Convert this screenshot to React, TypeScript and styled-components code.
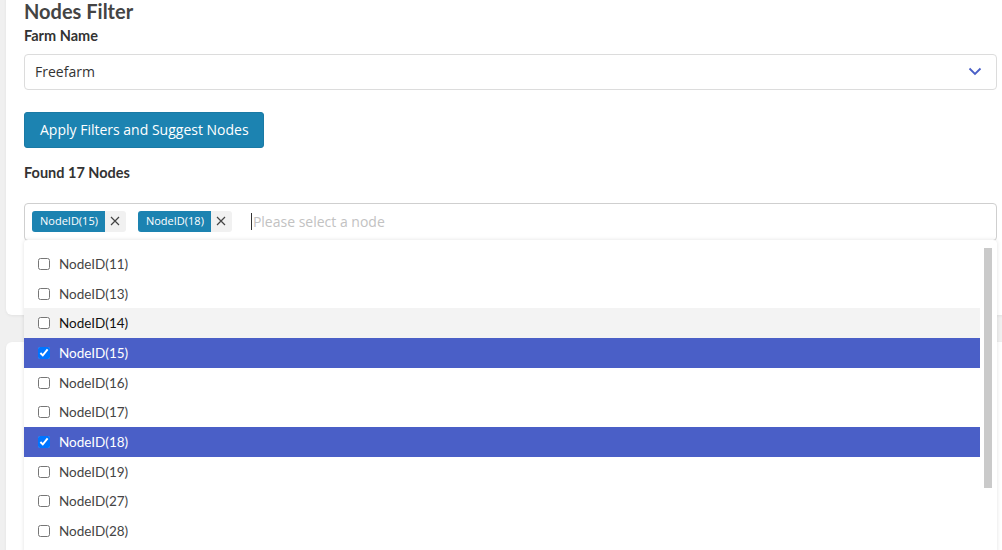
import { FC } from 'react';
import styled, { createGlobalStyle } from 'styled-components';

const GlobalStyle = createGlobalStyle`
    html, body {
        margin: 0;
        padding: 0;
        background: #f0f0f0;
        overflow: hidden;
        height: 550px;
    }
    body {
        font-family: Lato, "Open Sans", sans-serif;
    }
`

const Page = styled.div`
    position: relative;
    display: flow-root;
    width: 1002px;
    height: 550px;
    overflow: hidden;
    padding-left: 6px;
    box-sizing: border-box;
`
const Card = styled.section`
    width: 1009px;
    box-sizing: border-box;
    background: #fff;
    border-radius: 6px;
    box-shadow: 0 1px 3px rgba(0,0,0,0.06);
    padding: 18px 18px 0 18px;
`
const FilterCard = styled(Card)`
    margin-top: -19px;
    height: 334px;
    display: flex;
    flex-direction: column;
`
const NextCard = styled(Card)`
    margin-top: 27px;
    height: 300px;
`
const Title = styled.h2`
    margin: 0;
    font-size: 20px;
    line-height: 24px;
    font-weight: 700;
    color: #444;
`
const Label = styled.div<{gap?: number}>`
    margin-top: ${p => p.gap ?? 0}px;
    font-size: 14.5px;
    line-height: 20px;
    font-weight: 700;
    color: #333;
`
const SelectBox = styled.div`
    margin-top: 8px;
    height: 36px;
    box-sizing: border-box;
    border: 1px solid #dcdcdc;
    border-radius: 4px;
    display: flex;
    align-items: center;
    justify-content: space-between;
    padding: 0 14px 2px 10px;
    font-family: "Open Sans", "Noto Sans", sans-serif;
    font-size: 14px;
    color: #333;
`
const PrimaryButton = styled.button`
    margin-top: 22px;
    align-self: flex-start;
    height: 36px;
    padding: 0 14px 2px 15px;
    background: #1c83b1;
    color: #fff;
    border: 1px solid #1a7aa5;
    border-radius: 3px;
    font-family: "Open Sans", "Noto Sans", sans-serif;
    font-size: 14px;
    cursor: pointer;
`
const MultiSelect = styled.div`
    margin-top: 20px;
    height: 38px;
    box-sizing: border-box;
    border: 1px solid #cfcfcf;
    border-radius: 4px;
    display: flex;
    align-items: center;
    padding: 0 7px 2px 7px;
    gap: 12px;
`
const Tag = styled.span`
    display: inline-flex;
    height: 21px;
    border-radius: 3px;
    overflow: hidden;
    font-family: "Open Sans", "Noto Sans", sans-serif;
    font-size: 11px;
`
const TagLabel = styled.span`
    background: #1c83b1;
    color: #fff;
    display: flex;
    align-items: center;
    padding: 0 7px 1px 8px;
`
const TagRemove = styled.span`
    background: #f1f1f1;
    width: 21px;
    display: flex;
    align-items: center;
    justify-content: center;
`
const Placeholder = styled.span`
    margin-left: 7px;
    display: flex;
    align-items: center;
    font-family: "Open Sans", "Noto Sans", sans-serif;
    font-size: 14px;
    color: #c2c2c2;
    &::before {
        content: '';
        width: 1px;
        height: 17px;
        background: #333;
        margin-right: 1px;
    }
`
const Dropdown = styled.div`
    position: absolute;
    left: 24px;
    top: 240px;
    width: 973px;
    height: 314px;
    overflow: hidden;
    background: #fff;
    border-radius: 4px;
    box-shadow: 0 0 4px rgba(0,0,0,0.12);
    display: flex;
`
const OptionList = styled.ul`
    list-style: none;
    margin: 0;
    padding: 9px 0 0 0;
    flex: 1;
`
const Option = styled.li<{state?: 'hover' | 'selected'}>`
    height: 29.7px;
    display: flex;
    align-items: center;
    padding-left: 14px;
    gap: 9px;
    font-size: 13.5px;
    background: ${p => p.state === 'selected' ? '#4a5fc7' : p.state === 'hover' ? '#f3f3f3' : 'transparent'};
    color: ${p => p.state === 'selected' ? '#fff' : p.state === 'hover' ? '#111' : '#444'};
`
const Check = styled.input`
    margin: 0;
    width: 12px;
    height: 12px;
`
const ScrollTrack = styled.div`
    width: 17px;
    padding-top: 8px;
    display: flex;
    justify-content: center;
`
const ScrollThumb = styled.div`
    width: 8px;
    height: 240px;
    background: #cacaca;
    margin-right: 1px;
`

const nodes = [11, 13, 14, 15, 16, 17, 18, 19, 27, 28];
const chosen = [15, 18];

const App: FC = () => {
    return (
        <Page>
            <GlobalStyle/>
            <FilterCard>
                <Title>Nodes Filter</Title>
                <Label gap={3}>Farm Name</Label>
                <SelectBox>
                    <span>Freefarm</span>
                    <svg width="14" height="9" viewBox="0 0 14 9">
                        <polyline points="1.5,1.5 7,7 12.5,1.5" fill="none" stroke="#4a5fc7" strokeWidth="1.8"/>
                    </svg>
                </SelectBox>
                <PrimaryButton>Apply Filters and Suggest Nodes</PrimaryButton>
                <Label gap={15}>Found 17 Nodes</Label>
                <MultiSelect>
                    {chosen.map(n => (
                        <Tag key={n}>
                            <TagLabel>NodeID({n})</TagLabel>
                            <TagRemove>
                                <svg width="10" height="10" viewBox="0 0 10 10">
                                    <path d="M1 1L9 9M9 1L1 9" stroke="#444" strokeWidth="1.2"/>
                                </svg>
                            </TagRemove>
                        </Tag>
                    ))}
                    <Placeholder>Please select a node</Placeholder>
                </MultiSelect>
            </FilterCard>
            <NextCard/>
            <Dropdown>
                <OptionList>
                    {nodes.map(n => (
                        <Option key={n} state={chosen.includes(n) ? 'selected' : n === 14 ? 'hover' : undefined}>
                            <Check type="checkbox" checked={chosen.includes(n)} readOnly/>
                            NodeID({n})
                        </Option>
                    ))}
                </OptionList>
                <ScrollTrack>
                    <ScrollThumb/>
                </ScrollTrack>
            </Dropdown>
        </Page>
    )
}

export default App;
